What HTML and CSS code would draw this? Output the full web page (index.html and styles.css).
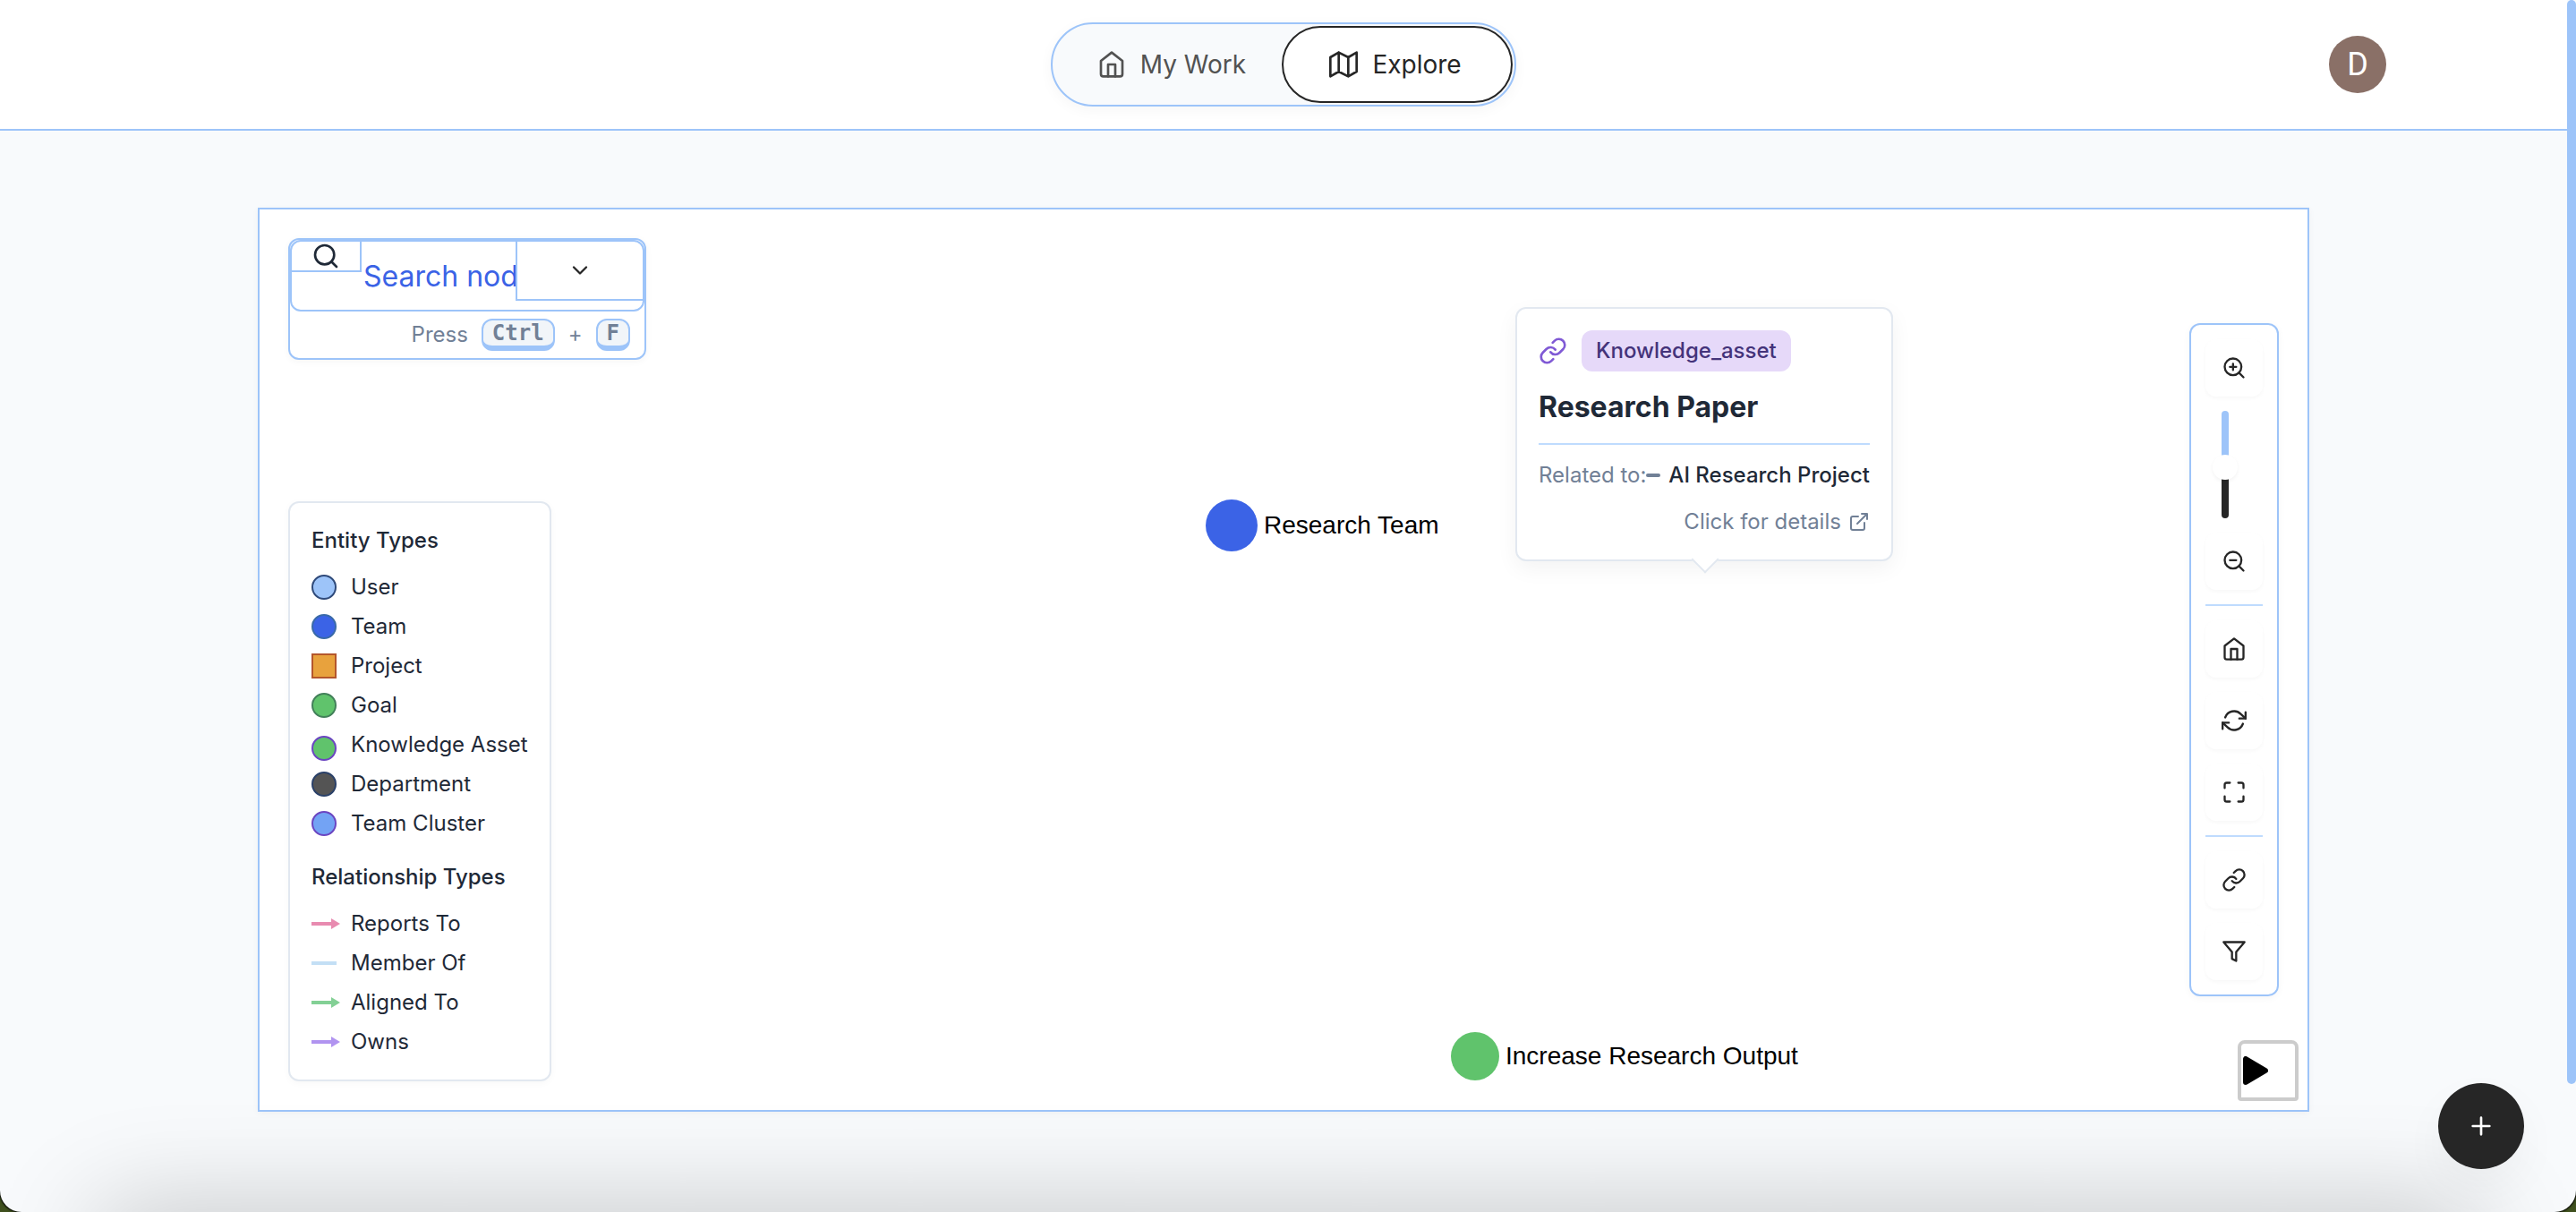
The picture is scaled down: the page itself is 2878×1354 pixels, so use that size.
FILE: index.html
```html
<!DOCTYPE html>
<html lang="en">
<head>
<meta charset="utf-8">
<title>Explore</title>
<link rel="stylesheet" href="styles.css">
</head>
<body>
<svg class="defs" aria-hidden="true">
  <symbol id="i-home" viewBox="0 0 24 24"><path d="M3 9l9-7 9 7v11a2 2 0 0 1-2 2H5a2 2 0 0 1-2-2z"/><path d="M9 22V12h6v10"/></symbol>
  <symbol id="i-map" viewBox="0 0 24 24"><path d="M1 6v16l7-4 8 4 7-4V2l-7 4-8-4-7 4zM8 2v16M16 6v16"/></symbol>
  <symbol id="i-search" viewBox="0 0 24 24"><circle cx="11" cy="11" r="8"/><path d="M21 21l-4.35-4.35"/></symbol>
  <symbol id="i-zoom-in" viewBox="0 0 24 24"><circle cx="11" cy="11" r="8"/><path d="M21 21l-4.35-4.35M11 8v6M8 11h6"/></symbol>
  <symbol id="i-zoom-out" viewBox="0 0 24 24"><circle cx="11" cy="11" r="8"/><path d="M21 21l-4.35-4.35M8 11h6"/></symbol>
  <symbol id="i-chevron" viewBox="0 0 24 24"><path d="M6 9l6 6 6-6"/></symbol>
  <symbol id="i-refresh" viewBox="0 0 24 24"><path d="M23 4v6h-6M1 20v-6h6"/><path d="M3.51 9a9 9 0 0 1 14.85-3.36L23 10M1 14l4.64 4.36A9 9 0 0 0 20.49 15"/></symbol>
  <symbol id="i-maximize" viewBox="0 0 24 24"><path d="M8 3H5a2 2 0 0 0-2 2v3m18 0V5a2 2 0 0 0-2-2h-3m0 18h3a2 2 0 0 0 2-2v-3M3 16v3a2 2 0 0 0 2 2h3"/></symbol>
  <symbol id="i-link" viewBox="0 0 24 24"><path d="M10 13a5 5 0 0 0 7.54.54l3-3a5 5 0 0 0-7.07-7.07l-1.72 1.71"/><path d="M14 11a5 5 0 0 0-7.54-.54l-3 3a5 5 0 0 0 7.07 7.07l1.71-1.71"/></symbol>
  <symbol id="i-filter" viewBox="0 0 24 24"><path d="M22 3H2l8 9.46V19l4 2v-8.54L22 3z"/></symbol>
  <symbol id="i-external" viewBox="0 0 24 24"><path d="M18 13v6a2 2 0 0 1-2 2H5a2 2 0 0 1-2-2V8a2 2 0 0 1 2-2h6M15 3h6v6M10 14L21 3"/></symbol>
  <symbol id="i-plus" viewBox="0 0 24 24"><path d="M12 5v14M5 12h14"/></symbol>
</svg>

<div class="window">
  <header class="header">
    <nav class="tabs">
      <a class="tab" href="#work"><svg class="icon"><use href="#i-home"/></svg>My Work</a>
      <a class="tab tab-active" href="#explore"><svg class="icon"><use href="#i-map"/></svg>Explore</a>
    </nav>
    <button class="avatar" aria-label="Account">D</button>
  </header>

  <main class="main">
    <section class="canvas">
      <div class="left">
        <div class="search">
          <div class="search-field">
            <label class="search-icon" for="q"><svg class="icon"><use href="#i-search"/></svg></label>
            <input class="search-input" id="q" type="text" placeholder="Search nodes...">
            <button class="search-more" aria-label="Search options"><svg class="icon icon-small"><use href="#i-chevron"/></svg></button>
          </div>
          <div class="search-hint"><span>Press</span><kbd>Ctrl</kbd><span>+</span><kbd>F</kbd></div>
        </div>

        <aside class="legend">
          <h2>Entity Types</h2>
          <ul>
            <li><i class="dot dot-user"></i>User</li>
            <li><i class="dot dot-team"></i>Team</li>
            <li><i class="dot dot-project"></i>Project</li>
            <li><i class="dot dot-goal"></i>Goal</li>
            <li class="low"><i class="dot dot-asset"></i>Knowledge Asset</li>
            <li><i class="dot dot-department"></i>Department</li>
            <li><i class="dot dot-cluster"></i>Team Cluster</li>
          </ul>
          <h2>Relationship Types</h2>
          <ul>
            <li><i class="line line-reports arrow"></i>Reports To</li>
            <li><i class="line line-member"></i>Member Of</li>
            <li><i class="line line-aligned arrow"></i>Aligned To</li>
            <li><i class="line line-owns arrow"></i>Owns</li>
          </ul>
        </aside>
      </div>

      <div class="node node-team"><i></i>Research Team</div>
      <div class="node node-goal"><i></i>Increase Research Output</div>

      <article class="tooltip">
        <div class="tooltip-type"><svg class="icon"><use href="#i-link"/></svg><span class="badge">Knowledge_asset</span></div>
        <h3>Research Paper</h3>
        <p class="related">Related to:<i class="dash"></i><strong>AI Research Project</strong></p>
        <p class="details">Click for details<svg class="icon"><use href="#i-external"/></svg></p>
      </article>

      <div class="toolbar">
        <button aria-label="Zoom in"><svg class="icon"><use href="#i-zoom-in"/></svg></button>
        <input class="zoom" type="range" min="0" max="100" value="47" aria-label="Zoom level">
        <button aria-label="Zoom out"><svg class="icon"><use href="#i-zoom-out"/></svg></button>
        <hr>
        <button aria-label="Reset view"><svg class="icon"><use href="#i-home"/></svg></button>
        <button aria-label="Refresh"><svg class="icon"><use href="#i-refresh"/></svg></button>
        <button aria-label="Full screen"><svg class="icon"><use href="#i-maximize"/></svg></button>
        <hr>
        <button aria-label="Links"><svg class="icon"><use href="#i-link"/></svg></button>
        <button aria-label="Filter"><svg class="icon"><use href="#i-filter"/></svg></button>
      </div>

      <button class="play" aria-label="Play"><svg viewBox="0 0 28 32"><path d="M3 3v26l22-13z"/></svg></button>
    </section>
  </main>

  <div class="shade"></div>
  <button class="fab" aria-label="Add"><svg class="icon"><use href="#i-plus"/></svg></button>
  <div class="scroll-thumb"></div>
</div>
</body>
</html>
```
FILE: styles.css
```css
* { box-sizing: border-box; }

:root {
  --blue: #9dc4f9;
  --blue-soft: #bfdbfe;
  --ink: #1f2937;
  --dark: #262626;
  --muted: #718096;
  --line: #e2e8f0;
}

body {
  margin: 0;
  background: #3f501e;
  font-family: Inter, "Liberation Sans", sans-serif;
  font-optical-sizing: none;
  font-size: 24px;
  line-height: 36px;
  color: var(--ink);
}

button { font: inherit; color: inherit; padding: 0; cursor: pointer; }
h2, h3, p, ul { margin: 0; padding: 0; }

.defs { position: absolute; width: 0; height: 0; }

.icon {
  flex: none;
  width: 32px;
  height: 32px;
  fill: none;
  stroke: currentColor;
  stroke-width: 2;
  stroke-linecap: round;
  stroke-linejoin: round;
}
.icon-small { width: 28px; height: 28px; }

.window {
  position: relative;
  display: flex;
  flex-direction: column;
  min-height: 100vh;
  padding-right: 10px;
  overflow: hidden;
  background: #f8fafc;
  border-radius: 0 0 24px 24px;
  box-shadow: 0 0 2px 1px #000;
}

/* Header */
.header {
  display: grid;
  grid-template-columns: 1fr auto 1fr;
  align-items: center;
  height: 146px;
  padding: 0 202px;
  background: #fff;
  border-bottom: 2px solid var(--blue);
}
.tabs {
  grid-column: 2;
  display: flex;
  padding: 2px;
  border: 2px solid var(--blue);
  border-radius: 47px;
  background: #f8fafc;
  box-shadow: 0 4px 16px rgba(0, 0, 0, .04);
}
.tab {
  display: flex;
  align-items: center;
  justify-content: center;
  gap: 16px;
  width: 262px;
  height: 86px;
  border: 2px solid transparent;
  border-radius: 43px;
  font-size: 28px;
  color: #525252;
  text-decoration: none;
}
.tab-active {
  width: 258px;
  margin-left: -8px;
  padding-right: 4px;
  border-color: var(--dark);
  background: #fff;
  color: var(--dark);
}
.avatar {
  justify-self: end;
  width: 64px;
  height: 64px;
  border: 0;
  border-radius: 50%;
  background: #8a7067;
  color: #fff;
  font-family: Roboto, sans-serif;
  font-size: 36px;
}

/* Canvas */
.main {
  flex: 1;
  display: flex;
  padding: 86px 288px 112px;
}
.canvas {
  position: relative;
  flex: 1;
  display: flex;
  justify-content: space-between;
  align-items: center;
  padding: 32px;
  border: 2px solid var(--blue);
  background: #fff;
  box-shadow: 0 2px 8px rgba(0, 0, 0, .04);
}
.left {
  align-self: stretch;
  display: flex;
  flex-direction: column;
  justify-content: space-between;
  align-items: flex-start;
}

/* Search */
.search {
  width: 400px;
  border: 2px solid var(--blue);
  border-radius: 12px;
  background: #fff;
  box-shadow: 0 2px 8px rgba(0, 0, 0, .04);
}
.search-field {
  display: flex;
  align-items: flex-start;
  height: 80px;
  border: 2px solid var(--blue);
  border-radius: 12px;
}
.search-icon {
  display: flex;
  justify-content: center;
  width: 78px;
  height: 34px;
  border: solid var(--blue);
  border-width: 0 2px 2px 0;
}
.search-input {
  flex: 1;
  min-width: 0;
  height: 76px;
  padding: 0 0 0 2px;
  border: 0;
  outline: 0;
  background: none;
  font: inherit;
  font-size: 32px;
  color: #3b63e6;
}
.search-input::placeholder { color: #3b63e6; opacity: 1; }
.search-more {
  display: flex;
  align-items: center;
  justify-content: center;
  width: 142px;
  height: 66px;
  border: solid var(--blue);
  border-width: 0 0 2px 2px;
  background: none;
  color: var(--dark);
}
.search-hint {
  display: flex;
  align-items: center;
  justify-content: flex-end;
  gap: 15px;
  padding: 8px 16px;
  color: var(--muted);
}
kbd {
  height: 36px;
  padding: 0 10px;
  border: 2px solid var(--blue);
  border-bottom-width: 6px;
  border-radius: 12px;
  background: #f1f5f9;
  font: bold 24px/28px "DejaVu Sans Mono", monospace;
}

/* Legend */
.legend {
  padding: 24px;
  border: 2px solid var(--line);
  border-radius: 12px;
  background: #fff;
  box-shadow: 0 2px 8px rgba(0, 0, 0, .03);
}
.legend h2 { font-size: 24px; font-weight: 500; margin-bottom: 16px; }
.legend ul { display: grid; gap: 8px; list-style: none; }
.legend ul + h2 { margin-top: 24px; }
.legend li { display: flex; align-items: center; gap: 16px; }
.legend .low { align-items: flex-end; }
.dot { width: 28px; height: 28px; border: 2px solid; border-radius: 50%; }
.dot-user { background: #9dc4f9; border-color: #2f4a7a; }
.dot-team { background: #3b63e6; border-color: #3a6aa8; }
.dot-project { background: #e8a23d; border-color: #b4562c; border-radius: 0; }
.dot-goal { background: #60c36c; border-color: #43805a; }
.dot-asset { background: #60c36c; border-color: #6b46c1; }
.dot-department { background: #545454; border-color: #2a4068; }
.dot-cluster { background: #73a3f4; border-color: #6b46c1; }
.line { position: relative; width: 28px; height: 4px; background: currentColor; }
.arrow::after {
  content: "";
  position: absolute;
  right: -4px;
  top: -4px;
  border: 6px solid transparent;
  border-right: 0;
  border-left: 10px solid currentColor;
}
.line-reports { color: #e88bb0; }
.line-member { color: #c3dff5; }
.line-aligned { color: #83d095; }
.line-owns { color: #b194f0; }

/* Graph nodes */
.node {
  position: absolute;
  display: flex;
  align-items: center;
  gap: 7px;
  font-family: "Liberation Sans", Arial, sans-serif;
  font-size: 28px;
  color: #000;
}
.node i { border-radius: 50%; }
.node-team { left: 1057px; top: 324px; }
.node-team i { width: 58px; height: 58px; background: #3b63e6; }
.node-goal { left: 1331px; top: 919px; }
.node-goal i { width: 54px; height: 54px; background: #60c36c; }

/* Node tooltip */
.tooltip {
  position: absolute;
  left: 1403px;
  top: 109px;
  padding: 24px;
  border: 2px solid var(--line);
  border-radius: 12px;
  background: #fff;
  box-shadow: 0 8px 24px rgba(0, 0, 0, .05);
}
.tooltip::after {
  content: "";
  position: absolute;
  left: 50%;
  bottom: -11px;
  width: 20px;
  height: 20px;
  margin-left: -10px;
  border: solid var(--line);
  border-width: 0 2px 2px 0;
  background: #fff;
  transform: rotate(45deg);
}
.tooltip-type { display: flex; align-items: center; gap: 16px; color: #805ad5; }
.badge {
  padding: 5px 16px;
  border-radius: 12px;
  background: #e6d9f9;
  color: #44337a;
  font-weight: 500;
}
.tooltip h3 {
  margin: 16px 0;
  padding-bottom: 16px;
  border-bottom: 2px solid var(--blue-soft);
  font-size: 32px;
  line-height: 48px;
  font-weight: 700;
}
.related { display: flex; align-items: center; color: var(--muted); }
.related strong { font-weight: 500; color: var(--ink); }
.dash { width: 16px; height: 4px; margin-right: 9px; border-radius: 2px; background: var(--muted); }
.details {
  display: flex;
  align-items: center;
  justify-content: flex-end;
  gap: 8px;
  margin-top: 16px;
  color: var(--muted);
}
.details .icon { width: 24px; height: 24px; }

/* Toolbar */
.toolbar {
  display: flex;
  flex-direction: column;
  gap: 16px;
  padding: 16px;
  border: 2px solid var(--blue);
  border-radius: 12px;
  background: #fff;
  box-shadow: 0 2px 8px rgba(0, 0, 0, .04);
  color: var(--dark);
}
.toolbar button {
  display: flex;
  align-items: center;
  justify-content: center;
  width: 64px;
  height: 64px;
  border: 0;
  border-radius: 12px;
  background: #fff;
  box-shadow: 0 2px 4px rgba(0, 0, 0, .03);
}
.toolbar .icon { width: 28px; height: 28px; }
.toolbar hr { width: 100%; height: 2px; margin: 0; border: 0; background: var(--blue-soft); }
.zoom {
  appearance: none;
  writing-mode: vertical-lr;
  direction: rtl;
  width: 28px;
  height: 120px;
  margin: 0 0 0 8px;
  background: none;
}
.zoom::-webkit-slider-runnable-track {
  width: 8px;
  border-radius: 4px;
  background: linear-gradient(var(--blue) 50%, var(--dark) 50%);
}
.zoom::-webkit-slider-thumb {
  appearance: none;
  width: 28px;
  height: 28px;
  margin-left: -10px;
  border-radius: 50%;
  background: #fff;
  box-shadow: 0 2px 4px rgba(0, 0, 0, .05);
}

.play {
  position: absolute;
  right: 10px;
  bottom: 10px;
  display: flex;
  align-items: center;
  width: 68px;
  height: 68px;
  padding-left: 2px;
  border: 4px solid #ccc;
  border-radius: 8px 8px 4px 4px;
  background: #fff;
}
.play svg {
  width: 28px;
  height: 32px;
  stroke: #000;
  stroke-width: 6;
  stroke-linejoin: round;
}

/* Overlays */
.shade {
  position: absolute;
  left: 110px;
  right: 110px;
  bottom: -100px;
  height: 100px;
  box-shadow: 0 0 120px rgba(0, 0, 0, .23);
}
.fab {
  position: absolute;
  right: 58px;
  bottom: 48px;
  display: flex;
  align-items: center;
  justify-content: center;
  width: 96px;
  height: 96px;
  border: 0;
  border-radius: 50%;
  background: var(--dark);
  color: #fff;
  box-shadow: 0 20px 50px rgba(0, 0, 0, .04);
}
.scroll-thumb {
  position: absolute;
  right: 0;
  top: 0;
  width: 10px;
  height: 1211px;
  border-radius: 5px;
  background: var(--blue);
}
```
